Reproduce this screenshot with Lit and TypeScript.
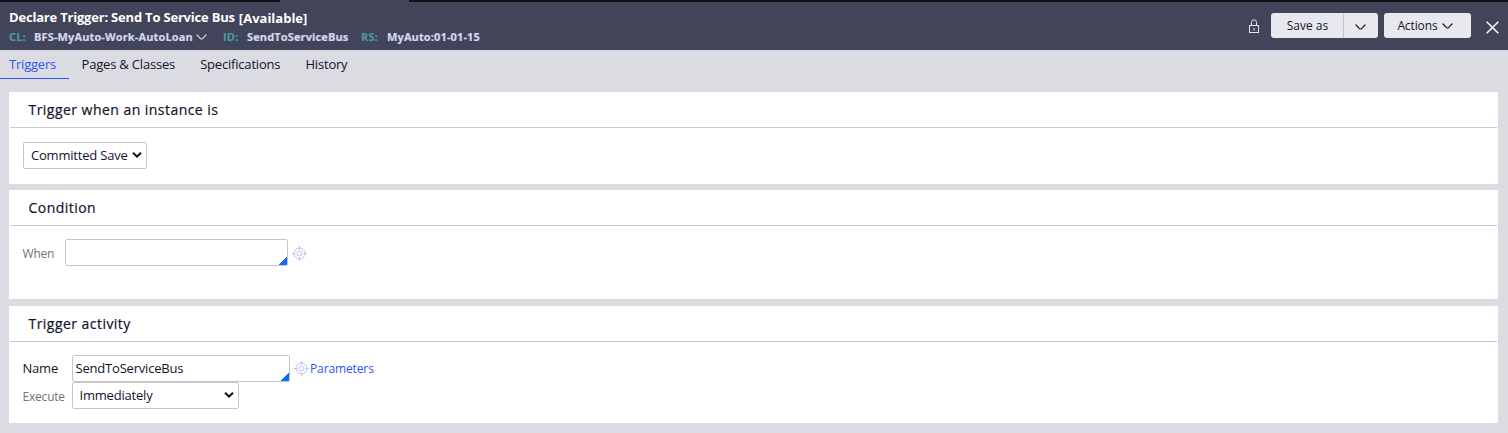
import { LitElement, html, css, svg } from "lit";
import { customElement, property } from "lit/decorators.js";

const chevron = (w: number, h: number, sw: number) => html`<svg
  width=${w}
  height=${h}
  viewBox="0 0 ${w} ${h}"
  fill="none"
  stroke="currentColor"
  stroke-width=${sw}
  stroke-linecap="round"
  stroke-linejoin="round"
>
  ${svg`<path d=${`M1 1 L${w / 2 - 1} ${h - 1.3} Q${w / 2} ${h - 0.7} ${w / 2 + 1} ${h - 1.3} L${w - 1} 1`} />`}
</svg>`;

const target = html`<svg width="16" height="16" viewBox="0 0 16 16" fill="none" stroke="#bcbcf8" stroke-width="1">
  <circle cx="7.5" cy="8.5" r="5.5" />
  <circle cx="7.5" cy="8.5" r="2.5" />
  <path d="M7.5 1V4.5M7.5 12.5v3.5M0 8.5H3.5M11.5 8.5h3.5" />
</svg>`;

@customElement("rule-panel")
export class RulePanel extends LitElement {
  @property() heading = "";

  static styles = css`
    :host {
      display: block;
      box-sizing: border-box;
      background: #fff;
    }
    .heading {
      box-sizing: border-box;
      height: 36px;
      margin: 0 1px;
      padding-left: 18.5px;
      border-bottom: 1px solid #c8c9d2;
      font-size: 14px;
      line-height: 35px;
      letter-spacing: 0.46px;
      -webkit-text-stroke: 0.2px #13132b;
      color: #13132b;
    }
  `;

  render() {
    return html`<div class="heading">${this.heading}</div>
      <slot></slot>`;
  }
}

@customElement("app-root")
export class AppRoot extends LitElement {
  static styles = css`
    :host {
      display: block;
      height: 433px;
      overflow: hidden;
      background: #dbdce1;
      font-family: "Open Sans", sans-serif;
      font-size: 13px;
      letter-spacing: -0.2px;
      color: #13132b;
    }
    svg {
      display: block;
      flex: none;
    }
    .strip {
      height: 2px;
      background: linear-gradient(90deg, #121216 280px, #424459 280px, #424459 409px, #121216 409px);
    }
    .header {
      height: 48px;
      display: flex;
      justify-content: space-between;
      background: #424459;
    }
    .info {
      padding: 6px 0 0 9px;
      white-space: nowrap;
    }
    .title {
      display: flex;
      height: 19px;
      line-height: 18px;
      font-weight: 700;
      color: #fff;
      letter-spacing: -0.2px;
    }
    .status {
      margin-left: 4px;
      padding-top: 1px;
      letter-spacing: 0;
    }
    .meta {
      display: flex;
      align-items: center;
      height: 18px;
      font-size: 11px;
      font-weight: 700;
      letter-spacing: 0.13px;
      -webkit-text-stroke: 0.2px currentColor;
      color: #d3d8f0;
    }
    .meta > span {
      flex: none;
    }
    .key {
      color: #4a9c9c;
    }
    .cl {
      width: 25px;
    }
    .class {
      width: 189px;
    }
    .id {
      width: 24px;
    }
    .name {
      width: 114px;
    }
    .rs {
      width: 26px;
    }
    .value {
      display: flex;
      align-items: center;
      gap: 3.5px;
    }
    .value svg {
      margin-top: 1px;
    }
    .tools {
      display: flex;
      padding: 11px 9px 0 0;
    }
    .lock {
      margin: 6px 11px 0 0;
    }
    .button {
      box-sizing: border-box;
      display: flex;
      align-items: center;
      justify-content: center;
      height: 25px;
      background: #e8e9ef;
      font-size: 12px;
      letter-spacing: 0;
      color: #13132b;
    }
    .save {
      width: 72px;
      padding-left: 1px;
      border-radius: 3px 0 0 3px;
    }
    .more {
      width: 35px;
      border-left: 1px solid #c4c5cf;
      border-radius: 0 3px 3px 0;
      padding: 2px 1px 0 0;
    }
    .actions {
      width: 87px;
      gap: 4px;
      padding-right: 5px;
      letter-spacing: -0.1px;
      margin: 0 15px 0 6px;
      border-radius: 3px;
    }
    .actions svg {
      margin-top: 1px;
    }
    .close {
      margin-top: 7.5px;
    }
    .tabs {
      display: flex;
      height: 42px;
    }
    .tab {
      box-sizing: border-box;
      height: 29px;
      line-height: 28px;
      padding: 0 12.6px;
      white-space: nowrap;
    }
    .active {
      width: 69px;
      padding: 0 0 0 9px;
      border-bottom: 1px solid #2f55f5;
      color: #2f55f5;
    }
    .content {
      display: flex;
      flex-direction: column;
      padding: 0 10px 0 9px;
    }
    .when-instance {
      height: 92px;
      margin-bottom: 6px;
    }
    .condition {
      height: 109px;
      margin-bottom: 7px;
    }
    .activity {
      height: 117px;
    }
    .row {
      display: flex;
      align-items: center;
      height: 27px;
      padding-left: 14px;
    }
    .first {
      margin-top: 13px;
    }
    .lower {
      margin-top: 14px;
    }
    .label {
      flex: none;
      width: 42px;
      font-size: 12px;
      padding-top: 1px;
      text-indent: -0.5px;
      color: #747474;
    }
    .wide {
      width: 49px;
    }
    .dark {
      font-size: 13px;
      color: #13132b;
      padding: 0 0 2px;
    }
    .field {
      box-sizing: border-box;
      display: flex;
      align-items: center;
      justify-content: space-between;
      height: 27px;
      padding-bottom: 2px;
      border: 1px solid #c6c6c9;
      border-radius: 2px;
      background: #fff;
      white-space: nowrap;
    }
    .saved {
      width: 124px;
      padding: 0 4px 2px 7px;
    }
    .immediately {
      width: 167px;
      padding: 0 4px 2px 6.5px;
    }
    .smart {
      padding-left: 2.5px;
      margin-right: 4px;
      background: linear-gradient(135deg, transparent 50%, #0a6cff 50%) right bottom / 9px 9px no-repeat;
    }
    .when-field {
      width: 223px;
    }
    .name-field {
      width: 218px;
    }
    .activity .smart + svg {
      margin: 0 0.5px 2px -0.5px;
    }
    .link {
      font-size: 12px;
      letter-spacing: -0.12px;
      color: #2f55f5;
    }
  `;

  private arrow() {
    return html`<svg width="10" height="7" viewBox="0 0 10 7" fill="none" stroke="#13132b" stroke-width="2">
      <path d="M1 1.7 L5 5.5 L9 1.7" />
    </svg>`;
  }

  render() {
    return html`
      <div class="strip"></div>
      <div class="header">
        <div class="info">
          <div class="title"><span>Declare Trigger: Send To Service Bus</span><span class="status">[Available]</span></div>
          <div class="meta">
            <span class="key cl">CL:</span>
            <span class="value class">BFS-MyAuto-Work-AutoLoan ${chevron(11, 6, 1.2)}</span>
            <span class="key id">ID:</span>
            <span class="value name">SendToServiceBus</span>
            <span class="key rs">RS:</span>
            <span class="value">MyAuto:01-01-15</span>
          </div>
        </div>
        <div class="tools">
          <svg class="lock" width="12" height="14" viewBox="0 0 12 14" fill="none" stroke="#e3e4ec">
            <rect x="1.5" y="6.5" width="9" height="7" />
            <path d="M3.5 6.5V3.5a2.5 2.7 0 0 1 5 0V6.5M6 9v2.5" />
          </svg>
          <div class="button save">Save as</div>
          <div class="button more">${chevron(11, 6, 1.2)}</div>
          <div class="button actions">Actions ${chevron(11, 6, 1.2)}</div>
          <svg class="close" width="13" height="13" viewBox="0 0 13 13" stroke="#fff" stroke-width="1.5">
            <path d="M0.7 0.7 L12.3 12.3 M12.3 0.7 L0.7 12.3" />
          </svg>
        </div>
      </div>
      <div class="tabs">
        <div class="tab active">Triggers</div>
        <div class="tab">Pages &amp; Classes</div>
        <div class="tab">Specifications</div>
        <div class="tab">History</div>
      </div>
      <div class="content">
        <rule-panel class="when-instance" heading="Trigger when an instance is">
          <div class="row lower"><div class="field saved">Committed Save ${this.arrow()}</div></div>
        </rule-panel>
        <rule-panel class="condition" heading="Condition">
          <div class="row first">
            <span class="label">When</span>
            <div class="field smart when-field"></div>
            ${target}
          </div>
        </rule-panel>
        <rule-panel class="activity" heading="Trigger activity">
          <div class="row first">
            <span class="label wide dark">Name</span>
            <div class="field smart name-field">SendToServiceBus</div>
            ${target}<span class="link">Parameters</span>
          </div>
          <div class="row">
            <span class="label wide">Execute</span>
            <div class="field immediately">Immediately ${this.arrow()}</div>
          </div>
        </rule-panel>
      </div>
    `;
  }
}
